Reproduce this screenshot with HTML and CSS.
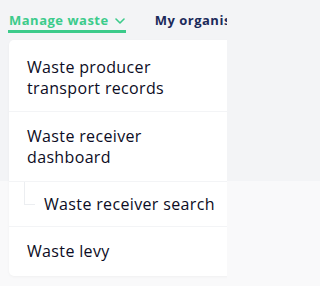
FILE: index.html
```html
<!DOCTYPE html>
<html>
<head>
<meta charset="utf-8">
<link rel="stylesheet" href="styles.css">
</head>
<body>
<nav class="topnav">
  <a class="tab active">Manage waste
    <svg class="chev" width="10" height="6" viewBox="0 0 10 6"><path d="M1 1l4 4 4-4" fill="none" stroke="currentColor" stroke-width="1.6" stroke-linecap="round" stroke-linejoin="round"/></svg>
  </a>
  <a class="tab">My organisation</a>
</nav>
<div class="menu">
  <a class="item first">Waste producer<br>transport records</a>
  <a class="item second">Waste receiver<br>dashboard</a>
  <a class="item sub"><span class="tree"></span>Waste receiver search</a>
  <a class="item last">Waste levy</a>
</div>
</body>
</html>
```
FILE: styles.css
```css
html, body { margin: 0; padding: 0; }
body {
  width: 227px;
  height: 286px;
  overflow: hidden;
  background: linear-gradient(#f3f4f6 0, #f3f4f6 181px, #f9f9fa 181px);
  font-family: "Open Sans", "Noto Sans", sans-serif;
}
.topnav {
  display: flex;
  gap: 28px;
  padding: 12px 0 0 8px;
  white-space: nowrap;
}
.tab {
  display: flex;
  align-items: center;
  gap: 6px;
  font-size: 13px;
  line-height: 16px;
  font-weight: 700;
  letter-spacing: 0.5px;
  color: #1b2a5a;
  padding: 0 1px 2px 1px;
  height: 16px;
  border-bottom: 3px solid transparent;
}
.tab.active {
  color: #3ccb8b;
  border-bottom-color: #3ccb8b;
}
.chev { margin-top: 1px; }
.menu {
  margin: 7px 0 0 9px;
  width: 260px;
  background: #fff;
  border-radius: 5px;
  box-shadow: 0 1px 3px rgba(0,0,0,0.04);
  display: flex;
  flex-direction: column;
}
.item {
  display: block;
  position: relative;
  padding: 14px 18px;
  font-size: 16px;
  line-height: 21px;
  letter-spacing: 0.35px;
  color: #0c0c24;
  border-bottom: 1px solid #f3f4f6;
}
.item.first { padding-top: 17px; padding-bottom: 12px; }
.item.second { padding-bottom: 13px; }
.item.sub {
  padding: 12px 18px 11px 35px;
}
.item.last { border-bottom: none; padding-bottom: 14px; }
.tree {
  position: absolute;
  left: 15px;
  top: 0;
  width: 10px;
  height: 22px;
  border-left: 1px solid #eceef1;
  border-bottom: 1px solid #eceef1;
}
```
